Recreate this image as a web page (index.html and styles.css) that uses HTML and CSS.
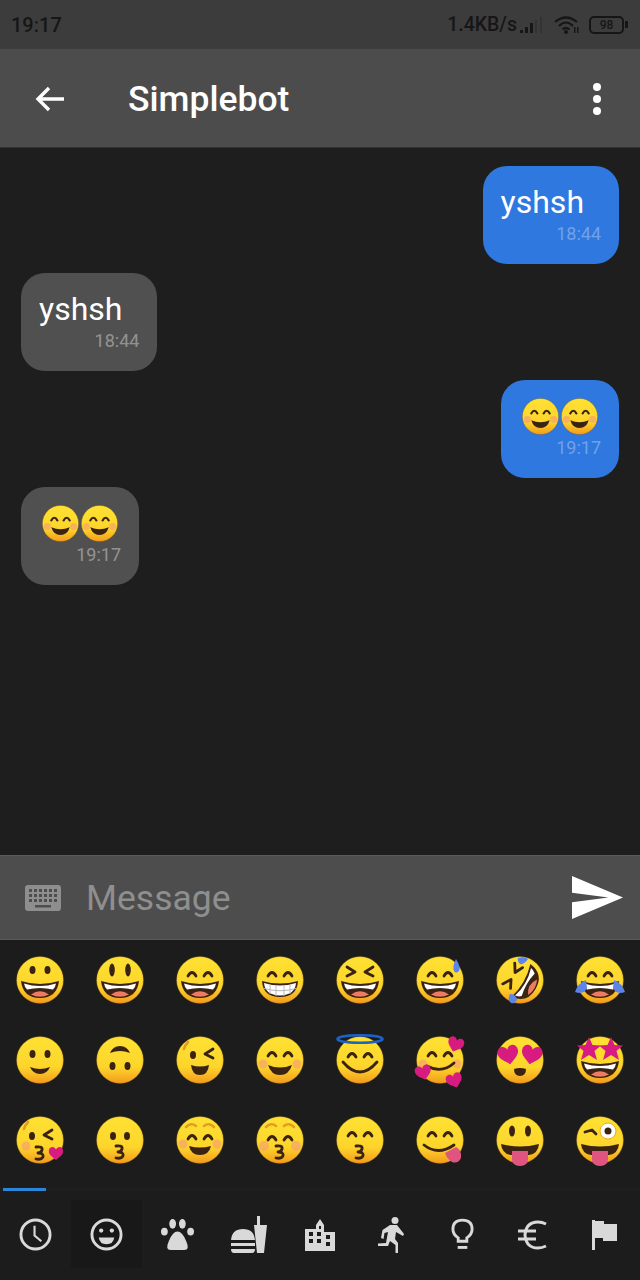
FILE: index.html
```html
<!DOCTYPE html>
<html>
<head>
  <title>Simplebot</title>
  <link rel="stylesheet" href="styles.css">
</head>
<body>
  <!-- shared emoji parts -->
  <svg class="defs" width="0" height="0">
    <defs>
      <linearGradient id="faceFill" x1="0" y1="0" x2="0" y2="1">
        <stop offset="0" stop-color="#fee133"/>
        <stop offset="0.65" stop-color="#fdd52b"/>
        <stop offset="1" stop-color="#f29a1c"/>
      </linearGradient>
      <g id="face"><circle class="skin" cx="24" cy="24" r="23.500"/></g>
      <g id="mouthOpen">
        <path class="ink" d="M5 25Q24 31 43 25Q41 42 24 42Q7 42 5 25Z"/>
        <path class="teeth" d="M8 27.500Q24 32.500 40 27.500Q39.500 31 37 33.500Q24 30.500 11 33.500Q8.500 31 8 27.500Z"/>
        <path class="tongue" d="M15 38.500Q24 32 33 38.500Q24 43 15 38.500Z"/>
      </g>
      <g id="eyesArc">
        <path class="line" d="M12 20Q16 13 20 20M28 20Q32 13 36 20"/>
      </g>
      <g id="blush">
        <circle class="blush" cx="7" cy="28" r="4.500"/>
        <circle class="blush" cx="41" cy="28" r="4.500"/>
      </g>
      <path id="kiss" class="kiss" d="M20 30Q27 29 26 33Q25 36 22 36Q28 36 27 40Q25 43 20 42"/>
      <path id="heart" d="M0 -3C-2 -8 -9 -7 -9 -1C-9 4 -3 7 0 10C3 7 9 4 9 -1C9 -7 2 -8 0 -3Z"/>
      <path id="crescent" class="ink" d="M12 29Q24 34 36 29Q33 39 24 39Q15 39 12 29Z"/>
      <g id="tongueOut">
        <path class="ink" d="M5 28Q24 33 43 28Q42 38 33 39H15Q6 38 5 28Z"/>
        <path class="lick" d="M16 35H32V43Q32 50 24 50Q16 50 16 43Z"/>
      </g>
    </defs>
  </svg>

  <div class="screen">
    <div class="status">
      <span class="clock">19:17</span>
      <div class="status-right">
        <span class="speed">1.4KB/s</span>
        <svg class="signal" viewBox="0 0 24 18">
          <rect x="1" y="14" width="3" height="3"/><rect x="6" y="11" width="3" height="6"/><rect x="11" y="7" width="3" height="10"/>
          <rect class="signal-off" x="16" y="4" width="2" height="13"/><rect class="signal-off" x="21" y="1" width="2" height="16"/>
        </svg>
        <svg class="wifi" viewBox="0 0 26 18">
          <path d="M1 6Q12 -3 23 6M5 10Q12 3 19 10M8.500 13.500Q12 10.500 15.500 13.500"/>
          <circle cx="12" cy="16" r="2"/>
          <rect x="20" y="11" width="1.500" height="6"/><rect x="23" y="11" width="1.500" height="6"/>
        </svg>
        <div class="battery"><span>98</span></div>
        <div class="battery-nub"></div>
      </div>
    </div>

    <div class="appbar">
      <svg class="back" viewBox="0 0 30 26"><path d="M29 13H3M14 2L3 13L14 24"/></svg>
      <span class="title">Simplebot</span>
      <div class="kebab"><i></i><i></i><i></i></div>
    </div>

    <div class="chat">
      <div class="bubble out">
        <div class="text">yshsh</div>
        <div class="time">18:44</div>
      </div>
      <div class="bubble in">
        <div class="text">yshsh</div>
        <div class="time">18:44</div>
      </div>
      <div class="bubble out">
        <div class="pair">
          <svg viewBox="0 0 48 48"><use href="#e-blushsmile"/></svg>
          <svg viewBox="0 0 48 48"><use href="#e-blushsmile"/></svg>
        </div>
        <div class="time">19:17</div>
      </div>
      <div class="bubble in">
        <div class="pair">
          <svg viewBox="0 0 48 48"><use href="#e-blushsmile"/></svg>
          <svg viewBox="0 0 48 48"><use href="#e-blushsmile"/></svg>
        </div>
        <div class="time">19:17</div>
      </div>
    </div>

    <div class="composer">
      <svg class="keyboard" viewBox="0 0 36 26">
        <path class="kb-body" d="M3 0H33Q36 0 36 3V23Q36 26 33 26H3Q0 26 0 23V3Q0 0 3 0Z"/>
        <path class="kb-keys" d="M4 4h3v3H4zM9 4h3v3H9zM14 4h3v3h-3zM19 4h3v3h-3zM24 4h3v3h-3zM29 4h3v3h-3zM4 9h3v3H4zM9 9h3v3H9zM14 9h3v3h-3zM19 9h3v3h-3zM24 9h3v3h-3zM29 9h3v3h-3zM4 14h3v3H4zM9 14h3v3H9zM14 14h3v3h-3zM19 14h3v3h-3zM24 14h3v3h-3zM29 14h3v3h-3zM10 20h16v2.500H10z"/>
      </svg>
      <span class="placeholder">Message</span>
      <svg class="send" viewBox="2 3 21 18" preserveAspectRatio="none"><path d="M2.010 21L23 12 2.010 3 2 10l15 2-15 2z"/></svg>
    </div>

    <div class="emoji-grid">
      <!-- row 1 -->
      <svg viewBox="0 0 48 48"><use href="#face"/><ellipse class="ink" cx="16.500" cy="14" rx="3" ry="4"/><ellipse class="ink" cx="31.500" cy="14" rx="3" ry="4"/><use href="#mouthOpen"/></svg>
      <svg viewBox="0 0 48 48"><use href="#face"/><ellipse class="ink" cx="16" cy="14" rx="2.800" ry="6.500"/><ellipse class="ink" cx="32" cy="14" rx="2.800" ry="6.500"/><use href="#mouthOpen"/></svg>
      <svg viewBox="0 0 48 48"><use href="#face"/><use href="#eyesArc"/><use href="#mouthOpen"/></svg>
      <svg viewBox="0 0 48 48"><use href="#face"/><use href="#eyesArc"/><path class="ink" d="M6 25Q24 30 42 25Q41 41 24 41Q7 41 6 25Z"/><path class="teeth" d="M8 27Q24 32 40 27Q39 39 24 39.500Q9 39 8 27Z"/><path class="grid-line" d="M8 32.500Q24 37 40 32.500M14 28.500V38M20 30V40M28 30V40M34 28.500V38"/></svg>
      <svg viewBox="0 0 48 48"><use href="#face"/><path class="line" d="M11 11L19 16L11 20M37 11L29 16L37 20"/><use href="#mouthOpen"/></svg>
      <svg viewBox="0 0 48 48"><use href="#face"/><use href="#eyesArc"/><use href="#mouthOpen"/><path class="blue" d="M40 3Q36 11 38 15Q40 18 43 15Q45 11 40 3Z"/></svg>
      <svg viewBox="0 0 48 48"><use href="#face"/><g transform="rotate(-60 24 24)"><path class="line" d="M12 11L20 16L12 20M36 11L28 16L36 20"/><use href="#mouthOpen"/></g><path class="blue" d="M22 2Q29 0 32 3Q28 9 24 8Q21 5 22 2ZM14 38Q19 38 21 43Q20 48 15 47Q11 43 14 38Z"/></svg>
      <svg viewBox="0 0 48 48"><use href="#face"/><use href="#eyesArc"/><use href="#mouthOpen"/><path class="blue" d="M10 24Q2 27 -1 36Q8 39 11 32ZM38 24Q46 27 49 36Q40 39 37 32Z"/></svg>
      <!-- row 2 -->
      <svg viewBox="0 0 48 48"><use href="#face"/><ellipse class="ink" cx="16.500" cy="18" rx="3" ry="4"/><ellipse class="ink" cx="31.500" cy="18" rx="3" ry="4"/><path class="ink" d="M14 31Q24 35 34 31Q31 38 24 38Q17 38 14 31Z"/></svg>
      <svg viewBox="0 0 48 48"><use href="#face"/><ellipse class="ink" cx="16.500" cy="30" rx="3" ry="4"/><ellipse class="ink" cx="31.500" cy="30" rx="3" ry="4"/><path class="ink" d="M14 17Q24 13 34 17Q31 10 24 10Q17 10 14 17Z"/></svg>
      <svg viewBox="0 0 48 48"><use href="#face"/><path class="brow" d="M12 6Q9 9 8 13"/><ellipse class="ink" cx="17" cy="19" rx="3" ry="4"/><path class="line" d="M37 13L29 18L37 22"/><path class="ink" d="M15 29Q24 32 33 29Q32 39 24 39Q16 39 15 29Z"/></svg>
      <svg viewBox="0 0 48 48"><use href="#face"/><use href="#blush"/><use href="#eyesArc"/><use href="#crescent"/></svg>
      <svg viewBox="0 0 48 48"><use href="#face"/><ellipse class="halo" cx="24" cy="3" rx="22.500" ry="3.800"/><use href="#eyesArc" transform="translate(0 1)"/><path class="line" d="M7 26Q24 46 41 26"/></svg>
      <svg viewBox="0 0 48 48"><use href="#face"/><use href="#blush"/><use href="#eyesArc"/><path class="line" d="M11 30Q26 38 38 27"/><use class="pink" href="#heart" transform="translate(40 7) rotate(20) scale(0.900)"/><use class="pink" href="#heart" transform="translate(7 35) rotate(-15) scale(0.900)"/><use class="pink" href="#heart" transform="translate(38 43) rotate(-20) scale(0.900)"/></svg>
      <svg viewBox="0 0 48 48"><use href="#face"/><use class="pink" href="#heart" transform="translate(12 17) rotate(-12) scale(1.150)"/><use class="pink" href="#heart" transform="translate(36 17) rotate(12) scale(1.150)"/><path class="ink" d="M18 33Q24 31 30 33Q30 40 24 40Q18 40 18 33Z"/></svg>
      <svg viewBox="0 0 48 48"><use href="#face"/><path class="pink" d="M13 1L16.500 9L25 9.500L18.500 15L21 24L13 19L5 24L7.500 15L1 9.500L9.500 9ZM35 1L38.500 9L47 9.500L40.500 15L43 24L35 19L27 24L29.500 15L23 9.500L31.500 9Z"/><use href="#mouthOpen"/></svg>
      <!-- row 3 -->
      <svg viewBox="0 0 48 48"><use href="#face"/><circle class="blush" cx="10" cy="30" r="4.500"/><path class="brow" d="M12 6Q9 9 8 13"/><ellipse class="ink" cx="16" cy="20" rx="3" ry="4"/><path class="line" d="M36 14L28 19L36 23"/><use href="#kiss" transform="translate(0 1)"/><use class="pink" href="#heart" transform="translate(40 36) scale(0.800)"/></svg>
      <svg viewBox="0 0 48 48"><use href="#face"/><ellipse class="ink" cx="17" cy="20" rx="3" ry="4"/><ellipse class="ink" cx="31" cy="20" rx="3" ry="4"/><use href="#kiss"/></svg>
      <svg viewBox="0 0 48 48"><use href="#face"/><use href="#blush"/><path class="brow" d="M10 11Q15 6 20 10M28 10Q33 6 38 11"/><use href="#eyesArc" transform="translate(0 3)"/><path class="ink" d="M13 30Q24 33 35 30Q33 39 24 39Q15 39 13 30Z"/></svg>
      <svg viewBox="0 0 48 48"><use href="#face"/><circle class="blush" cx="8" cy="30" r="5"/><circle class="blush" cx="40" cy="30" r="5"/><path class="brow" d="M10 11Q15 6 20 10M28 10Q33 6 38 11"/><use href="#eyesArc" transform="translate(0 4)"/><use href="#kiss"/></svg>
      <svg viewBox="0 0 48 48"><use href="#face"/><use href="#eyesArc"/><use href="#kiss"/></svg>
      <svg viewBox="0 0 48 48"><use href="#face"/><use href="#eyesArc"/><path class="line" d="M8 29Q22 40 38 29"/><path class="lick" d="M29 37L40 31Q46 34 45 42Q42 48 36 46Q31 43 29 37Z"/></svg>
      <svg viewBox="0 0 48 48"><use href="#face"/><ellipse class="ink" cx="16" cy="15" rx="3" ry="5.500"/><ellipse class="ink" cx="32" cy="15" rx="3" ry="5.500"/><use href="#tongueOut"/></svg>
      <svg viewBox="0 0 48 48"><use href="#face"/><path class="line" d="M9 16L16 14L20 18"/><circle class="wink-white" cx="32" cy="15" r="8"/><circle class="ink" cx="32" cy="15" r="3.500"/><use href="#tongueOut"/></svg>
    </div>

    <div class="tab-indicator"></div>
    <div class="tabs">
      <div class="tab">
        <svg class="ic-clock" viewBox="0 0 34 34"><circle class="ic-line" cx="17" cy="17" r="15"/><path class="ic-thin" d="M16 8V18L23 24"/></svg>
      </div>
      <div class="tab active">
        <svg class="ic-clock" viewBox="0 0 34 34"><circle class="ic-line" cx="17" cy="17" r="15"/><circle class="ic-fill" cx="11.500" cy="13" r="2.200"/><circle class="ic-fill" cx="22.500" cy="13" r="2.200"/><path class="ic-fill" d="M9 20H25Q24 27 17 27Q10 27 9 20Z"/></svg>
      </div>
      <div class="tab">
        <svg class="ic-clock" viewBox="0 0 34 34"><ellipse class="ic-fill" cx="3.500" cy="14" rx="3.500" ry="4"/><ellipse class="ic-fill" cx="12" cy="6" rx="3.500" ry="5"/><ellipse class="ic-fill" cx="22" cy="6" rx="3.500" ry="5"/><ellipse class="ic-fill" cx="30.500" cy="14" rx="3.500" ry="4"/><path class="ic-fill" d="M17 14Q22 14 26 24Q30 33 24 33H10Q4 33 8 24Q12 14 17 14Z"/></svg>
      </div>
      <div class="tab">
        <svg class="ic-food" viewBox="0 0 36 38"><path class="ic-fill" d="M0 24Q1 13 12 13Q23 13 24 24ZM0 27H24V30H0ZM0 33H24Q24 37 21 37H3Q0 37 0 33Z"/><path class="ic-fill" d="M26 37L23 9H26V0H29V9H36L33 37Z"/></svg>
      </div>
      <div class="tab">
        <svg class="ic-city" viewBox="0 0 30 32"><path class="ic-fill" fill-rule="evenodd" d="M11 6L15 0L19 6V13H30V32H0V10H11ZM4 13V17H8V13ZM4 20V24H8V20ZM12 13V17H16V13ZM12 20V24H16V20ZM21 16V20H25V16ZM21 23V27H25V23ZM14 7V10H16V7Z"/></svg>
      </div>
      <div class="tab">
        <svg class="ic-run" viewBox="0 0 27 36"><circle class="ic-fill" cx="17" cy="3.500" r="3.500"/><path class="ic-fill" d="M12 8H19L26 17L25 19L18 15L17 22L20 26V36H17.500V28L12 24L10 29H0V26.500L8 26L10 15L6.500 16L5.500 22L3 21L4.500 13Z"/></svg>
      </div>
      <div class="tab">
        <svg class="ic-bulb" viewBox="0 0 24 34"><path class="ic-line" d="M7.500 24V20.500Q2 17 2 11.500Q2 2 12 2Q22 2 22 11.500Q22 17 16.500 20.500V24Z"/><rect class="ic-fill" x="7" y="29" width="10" height="3"/></svg>
      </div>
      <div class="tab">
        <svg class="ic-euro" viewBox="0 0 30 30"><path class="ic-line" d="M28 4Q24 2 20 2Q8 2 7 15Q8 28 20 28Q24 28 28 26M0 11H18M0 19H18"/></svg>
      </div>
      <div class="tab">
        <svg class="ic-flag" viewBox="0 0 25 30"><path class="ic-fill" d="M0 0H3V30H0ZM3 1H12V4H25V21H11V18H3Z"/></svg>
      </div>
    </div>
  </div>

  <!-- the smile used inside the bubbles -->
  <svg class="defs" width="0" height="0">
    <symbol id="e-blushsmile" viewBox="0 0 48 48">
      <use href="#face"/><use href="#blush"/><use href="#eyesArc"/><use href="#crescent"/>
    </symbol>
  </svg>
</body>
</html>
```

FILE: styles.css
```css
* { box-sizing: border-box; }
body { margin: 0; background: #1e1e1e; color: #fff; font-family: Roboto, sans-serif; }
.defs { position: absolute; }
.screen { width: 640px; height: 1280px; display: flex; flex-direction: column; overflow: hidden; }

/* status bar */
.status {
  height: 49px; flex: none;
  display: flex; align-items: center; justify-content: space-between;
  padding: 0 12px 0 11px;
  background: #3c3c3c; color: #161616;
}
.clock { font-size: 20px; font-weight: 500; }
.status-right { display: flex; align-items: center; }
.speed { font-size: 19.500px; font-weight: 500; }
.signal { width: 24px; height: 18px; margin-left: 2px; fill: #161616; }
.signal-off { fill: #333; }
.wifi { width: 26px; height: 18px; margin-left: 11px; fill: #161616; }
.wifi path { fill: none; stroke: #161616; stroke-width: 2.200; }
.battery {
  width: 35px; height: 18px; margin-left: 9px;
  border: 2px solid #161616; border-radius: 5px;
  font-size: 12px; line-height: 14px; text-align: center; font-weight: 500;
}
.battery-nub { width: 3px; height: 7px; margin-left: 1px; background: #161616; }

/* app bar */
.appbar {
  height: 99px; flex: none;
  display: flex; align-items: center;
  padding: 1px 39px 0 35px;
  background: #4c4c4c;
  border-bottom: 1px solid #333;
}
.back { width: 30px; height: 26px; fill: none; stroke: #fff; stroke-width: 3.400; }
.title { margin-left: 63px; font-size: 35.500px; font-weight: 500; flex: 1; }
.kebab { display: flex; flex-direction: column; gap: 4px; }
.kebab i { width: 8px; height: 8px; border-radius: 50%; background: #fff; }

/* messages */
.chat {
  flex: 1; min-height: 0;
  display: flex; flex-direction: column; align-items: flex-start;
  gap: 9.500px;
  padding: 18px 21px 0;
}
.bubble { height: 97.500px; flex: none; padding: 16px 18px 0; border-radius: 24px; }
.bubble.out { align-self: flex-end; background: #2f78e0; }
.bubble.in { background: #505050; }
.text { font-size: 32px; line-height: 40px; padding-right: 17px; }
.time { margin-top: 1px; font-size: 18px; line-height: 21px; text-align: right; color: rgba(255,255,255,0.4); }
.bubble.out .time { color: rgba(255,255,255,0.32); }
.pair { display: flex; gap: 2px; height: 40px; padding: 2px 3px 0 3px; }
.pair svg { width: 37px; height: 37px; overflow: visible; }

/* message input */
.composer {
  height: 85px; flex: none;
  display: flex; align-items: center;
  padding: 0 17px 0 25px;
  background: #4d4d4d;
  border-top: 1px solid #5a5a5a; border-bottom: 1px solid #5a5a5a;
}
.keyboard { width: 36px; height: 26px; }
.kb-body { fill: #8e8e8e; }
.kb-keys { fill: #4d4d4d; }
.placeholder { margin-left: 25px; flex: 1; font-size: 35.500px; color: #8f8f8f; }
.send { width: 51px; height: 43px; fill: #fff; }

/* emoji panel */
.emoji-grid {
  height: 247px; flex: none;
  display: grid; grid-template-columns: repeat(8, 80px); grid-auto-rows: 80px;
  justify-items: center; align-items: center;
  background: #1c1c1c;
}
.emoji-grid svg { width: 48px; height: 48px; overflow: visible; }
.skin { fill: url(#faceFill); stroke: #6d4a10; stroke-width: 0.400; }
.ink { fill: #3b2314; }
.teeth { fill: #fff; }
.tongue { fill: #ef7a63; }
.line { fill: none; stroke: #3b2314; stroke-width: 2.800; stroke-linecap: round; stroke-linejoin: round; }
.kiss { fill: none; stroke: #3b2314; stroke-width: 2.800; stroke-linecap: round; stroke-linejoin: round; }
.brow { fill: none; stroke: #e59a22; stroke-width: 2.500; stroke-linecap: round; }
.blush { fill: #f59a7a; opacity: 0.6; }
.blue { fill: #5b85e8; }
.pink { fill: #d81b80; }
.lick { fill: #e0557f; }
.halo { fill: none; stroke: #1a63c9; stroke-width: 2.500; }
.grid-line { fill: none; stroke: #b8b8b8; stroke-width: 1; }
.wink-white { fill: #fff; stroke: #f0a820; stroke-width: 1; }

/* category tabs */
.tab-indicator { width: 43px; height: 3px; flex: none; margin: 1px 0 0 3px; background: #2a86d8; }
.tabs {
  height: 89px; flex: none;
  display: grid; grid-template-columns: repeat(9, 71.100px); align-content: start;
  padding-top: 9px;
  background: #1c1c1c;
}
.tab { height: 68px; padding-top: 1px; display: flex; align-items: center; justify-content: center; }
.tab.active { background: #181818; }
.ic-clock { width: 33px; height: 33px; }
.ic-food { width: 36px; height: 38px; }
.ic-city { width: 30px; height: 32px; }
.ic-run { width: 27px; height: 36px; }
.ic-bulb { width: 23px; height: 33px; }
.ic-euro { width: 30px; height: 30px; }
.ic-flag { width: 25px; height: 30px; }
.ic-fill { fill: #d9d9d9; }
.ic-line { fill: none; stroke: #d9d9d9; stroke-width: 3; }
.ic-thin { fill: none; stroke: #d9d9d9; stroke-width: 2.200; }
```
